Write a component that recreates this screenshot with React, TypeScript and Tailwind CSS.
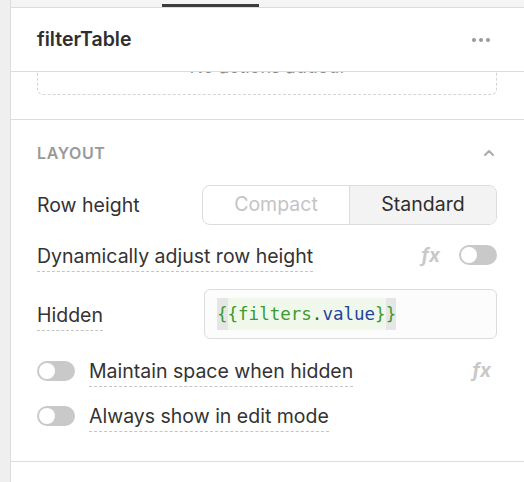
import React from "react"

function Toggle() {
  return (
    <div className="w-[38px] h-[20px] rounded-full bg-[#c9c9c9] flex items-center px-[2px] shrink-0">
      <div className="w-[16px] h-[16px] rounded-full bg-white" />
    </div>
  )
}

function Fx() {
  return (
    <span className="text-[#c8c8c8] italic font-bold text-[19px] leading-none font-['Inter',sans-serif]">
      fx
    </span>
  )
}

function Dashed({ children }: { children: React.ReactNode }) {
  return (
    <span className="border-b-[1.5px] border-dashed border-[#c4c4c4] pb-[3px] leading-[23px]">
      {children}
    </span>
  )
}

export default function App() {
  return (
    <div className="flex h-screen bg-white font-['Inter',sans-serif] text-[#333] overflow-hidden">

      {/* LEFT STRIP */}
      <div className="w-[11px] bg-[#efefef] border-r border-[#dcdcdc] shrink-0" />

      <div className="flex-1 flex flex-col">

        {/* TAB BAR */}
        <div className="h-[8px] bg-[#f4f4f4] border-b border-[#dcdcdc] flex items-end pl-[151px]">
          <div className="w-[97px] h-[3px] bg-[#3c3c3c]" />
        </div>

        {/* HEADER */}
        <div className="h-[64px] flex items-center justify-between pl-[26px] pr-[34px] border-b border-[#dcdcdc]">
          <h1 className="text-[19.5px] font-semibold text-[#2e2e2e]">filterTable</h1>
          <div className="flex gap-[3px]">
            <div className="w-[4px] h-[4px] rounded-full bg-[#999]" />
            <div className="w-[4px] h-[4px] rounded-full bg-[#999]" />
            <div className="w-[4px] h-[4px] rounded-full bg-[#999]" />
          </div>
        </div>

        {/* ACTIONS (scrolled) */}
        <div className="h-[48px] overflow-hidden pl-[26px] pr-[27px] border-b border-[#dcdcdc]">
          <div className="-mt-[34px] h-[57px] border border-dashed border-[#d4d4d4] rounded-[6px] flex items-center justify-center">
            <span className="text-[18px] text-[#8a8a8a]">No actions added.</span>
          </div>
        </div>

        {/* LAYOUT */}
        <div className="pl-[26px] pr-[27px] pt-[22px] pb-[33px] border-b border-[#dcdcdc]">

          <div className="flex items-center justify-between h-[22px]">
            <span className="text-[16px] font-semibold tracking-[0.6px] text-[#999]">LAYOUT</span>
            <svg width="12" height="8" viewBox="0 0 12 8" className="mr-[2px]">
              <path d="M2 6 L6 2 L10 6" fill="none" stroke="#aaa" strokeWidth="2" strokeLinecap="round" strokeLinejoin="round" />
            </svg>
          </div>

          {/* ROW HEIGHT */}
          <div className="flex items-center justify-between mt-[21px]">
            <span className="text-[19.5px] pt-[2px]">Row height</span>
            <div className="w-[295px] h-[40px] border border-[#dcdcdc] rounded-[8px] flex overflow-hidden text-[19.5px]">
              <div className="flex-1 flex items-center justify-center text-[#c4c4c4]">Compact</div>
              <div className="flex-1 flex items-center justify-center bg-[#f3f3f3] border-l border-[#dcdcdc] text-[#2e2e2e]">Standard</div>
            </div>
          </div>

          {/* DYNAMIC */}
          <div className="flex items-center justify-between mt-[18px] h-[24px]">
            <span className="text-[19.5px] pt-[3px]"><Dashed>Dynamically adjust row height</Dashed></span>
            <div className="flex items-center gap-[19px]">
              <Fx />
              <Toggle />
            </div>
          </div>

          {/* HIDDEN */}
          <div className="flex items-center justify-between mt-[22px]">
            <span className="text-[19.5px] pt-[3px]"><Dashed>Hidden</Dashed></span>
            <div className="w-[293px] h-[50px] border border-[#dcdcdc] rounded-[6px] bg-[#fcfcfc] flex items-center px-[12px] font-['DejaVu_Sans_Mono',monospace] text-[17.5px]">
              <span className="bg-[#e6e6e6] text-[#3d9a2f] py-[3px]">{"{"}</span>
              <span className="bg-[#eff8eb] py-[3px]">
                <span className="text-[#3d9a2f]">{"{filters"}</span>
                <span className="text-[#2f6b2a]">.</span>
                <span className="text-[#22439c]">value</span>
                <span className="text-[#3d9a2f]">{"}"}</span>
              </span>
              <span className="bg-[#e6e6e6] text-[#3d9a2f] py-[3px]">{"}"}</span>
            </div>
          </div>

          {/* MAINTAIN */}
          <div className="flex items-center justify-between mt-[20px] h-[24px]">
            <div className="flex items-center gap-[14px]">
              <Toggle />
              <span className="text-[19.5px] pt-[2px]"><Dashed>Maintain space when hidden</Dashed></span>
            </div>
            <div className="mr-[6px]"><Fx /></div>
          </div>

          {/* ALWAYS SHOW */}
          <div className="flex items-center mt-[21px] h-[24px] gap-[14px]">
            <Toggle />
            <span className="text-[19.5px] pt-[2px]"><Dashed>Always show in edit mode</Dashed></span>
          </div>
        </div>

      </div>
    </div>
  )
}
